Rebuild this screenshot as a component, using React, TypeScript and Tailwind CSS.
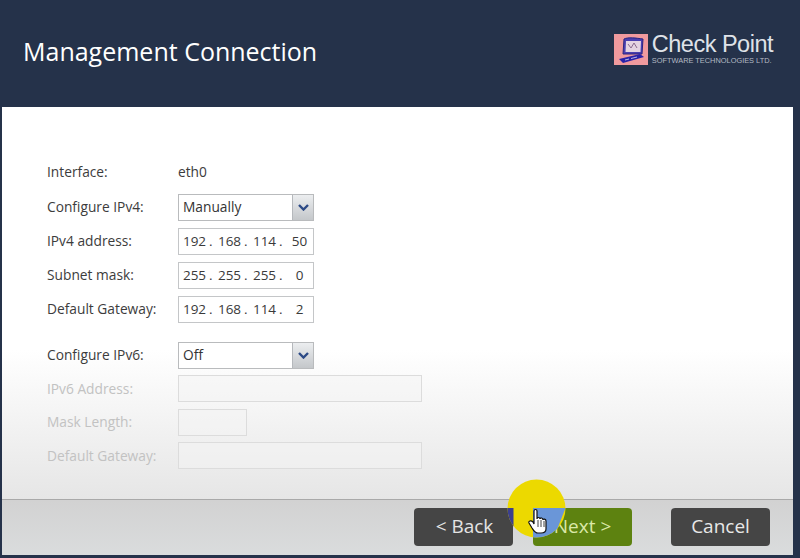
import React from "react";

const font = { fontFamily: '"Open Sans", sans-serif' };

function Arrow() {
  return (
    <div className="flex h-full w-[21px] items-center justify-center border-l border-[#b5b8bc] bg-gradient-to-b from-[#eceef0] to-[#c4c7ca]">
      <svg width="11" height="7" viewBox="0 0 11 7">
        <path d="M1 1 L5.5 5.5 L10 1" fill="none" stroke="#2c4a86" strokeWidth="2.4" />
      </svg>
    </div>
  );
}

function Select({ value }: { value: string }) {
  return (
    <div className="flex h-[27px] w-[136px] items-center justify-between border border-[#b9bbbd] bg-white">
      <span className="pl-[4px] text-[13.75px] text-[#333]">{value}</span>
      <Arrow />
    </div>
  );
}

function Ip({ a, b, c, d }: { a: string; b: string; c: string; d: string }) {
  return (
    <div className="flex h-[27px] w-[136px] items-center border border-[#c4c6c8] bg-white pl-[2px] text-[13.5px] text-[#3a3a3a]">
      <span className="w-[27px] text-center">{a}</span>
      <span className="w-[8px] pl-[1px] text-left">.</span>
      <span className="w-[27px] text-center">{b}</span>
      <span className="w-[8px] pl-[1px] text-left">.</span>
      <span className="w-[27px] text-center">{c}</span>
      <span className="w-[8px] pl-[1px] text-left">.</span>
      <span className="w-[27px] text-center">{d}</span>
    </div>
  );
}

function Row({ label, children, muted, mt, lcls = "" }: { label: string; children: React.ReactNode; muted?: boolean; mt: string; lcls?: string }) {
  return (
    <div className={`flex items-center ${mt}`}>
      <div className={`w-[131px] text-[13.75px] ${lcls} ${muted ? "text-[#c2c2c2]" : "text-[#3c3c3c]"}`}>{label}</div>
      {children}
    </div>
  );
}

function Disabled({ w }: { w: string }) {
  return <div className={`h-[27px] border border-[#dcdcdc] bg-[#f3f3f3]/50 ${w}`} />;
}

function Btn({ children, cls }: { children: React.ReactNode; cls: string }) {
  return (
    <div className={`flex h-[38px] w-[99px] items-center justify-center rounded-[4px] pb-[1px] text-[19px] ${cls}`}>
      {children}
    </div>
  );
}

function Logo() {
  return (
    <div className="flex items-start">
      <div className="flex h-[31px] w-[34px] items-center justify-center bg-[#f09a9e]">
        <svg width="30" height="28" viewBox="0 0 30 28">
          <path d="M8 3 C12 1 20 2 27 3 L26 18 L7 18 Z" fill="#4a3fb0" stroke="#2a2580" />
          <path d="M10 5 L25 5 L24.500 16 L9.500 16 Z" fill="#e4d4e2" />
          <path d="M12 8 L15 12 L18 7 L21 12" fill="none" stroke="#8a6a90" strokeWidth="1" />
          <path d="M3 23 L24 18 L28 21 L7 27 Z" fill="#2a22a8" />
          <path d="M9 24 L13 23 M15 22.500 L21 21" stroke="#c7c4ee" strokeWidth="0.9" />
        </svg>
      </div>
      <div className="ml-[4px] flex flex-col" style={{ fontFamily: '"Liberation Sans", sans-serif' }}>
        <span className="mt-[-2px] h-[25px] whitespace-nowrap text-[23.500px] leading-[25px] tracking-[-0.5px] text-[#dfe2e8]">
          Check Point
        </span>
        <span className="whitespace-nowrap text-[7.400px] leading-[8px] text-[#b4bac4]">
          SOFTWARE TECHNOLOGIES LTD.
        </span>
      </div>
    </div>
  );
}

export default function App() {
  return (
    <div className="relative flex h-[558px] w-[800px] flex-col overflow-hidden bg-[#25324a]" style={font}>
      <header className="flex h-[107px] items-start justify-between pl-[23px] pr-[27px]">
        <h1 className="mt-[34px] text-[25px] leading-[34px] text-white">Management Connection</h1>
        <div className="mt-[34px]">
          <Logo />
        </div>
      </header>

      <main className="ml-[2px] mr-[7px] flex h-[448px] flex-col bg-white">
        <div className="h-[392px] bg-gradient-to-b from-white from-[62%] to-[#e6e6e6] pl-[45px] pt-[55px]">
          <div className="flex h-[20px] items-center">
            <div className="w-[131px] text-[13.75px] text-[#3c3c3c]">Interface:</div>
            <span className="text-[13.75px] text-[#3c3c3c]">eth0</span>
          </div>
          <Row label="Configure IPv4:" mt="mt-[12px]">
            <Select value="Manually" />
          </Row>
          <Row label="IPv4 address:" mt="mt-[7px]">
            <Ip a="192" b="168" c="114" d="50" />
          </Row>
          <Row label="Subnet mask:" mt="mt-[7px]">
            <Ip a="255" b="255" c="255" d="0" />
          </Row>
          <Row label="Default Gateway:" mt="mt-[7px]">
            <Ip a="192" b="168" c="114" d="2" />
          </Row>
          <Row label="Configure IPv6:" mt="mt-[19px]">
            <Select value="Off" />
          </Row>
          <Row label="IPv6 Address:" muted mt="mt-[6px]" lcls="pt-[2px]">
            <Disabled w="w-[244px]" />
          </Row>
          <Row label="Mask Length:" muted mt="mt-[7px]">
            <Disabled w="w-[69px]" />
          </Row>
          <Row label="Default Gateway:" muted mt="mt-[6px]" lcls="pt-[2px]">
            <Disabled w="w-[244px]" />
          </Row>
        </div>
        <footer className="flex flex-1 items-start justify-end border-t border-[#a9a9a9] bg-gradient-to-b from-[#d2d2d2] to-[#dadcdd] pr-[23px] pt-[8px]">
          <Btn cls="bg-[#454545] pl-[2px] text-[#e4e4e4]">&lt; Back</Btn>
          <Btn cls="ml-[20px] bg-[#5d8210] text-[#dbe8a8]">Next &gt;</Btn>
          <Btn cls="ml-[39px] bg-[#454545] text-[#e8e8e8]">Cancel</Btn>
        </footer>
      </main>

      {/* Recording highlight and pointer over the button */}
      <svg className="absolute left-[500px] top-[475px]" width="72" height="72" viewBox="0 0 72 72">
        <defs>
          <clipPath id="btnclip">
            <path d="M33 33 H65.500 L53 65 H33 Z" />
          </clipPath>
          <clipPath id="backclip">
            <path d="M0 33 H13.500 V58 H0 Z" />
          </clipPath>
        </defs>
        <circle cx="36.500" cy="33.500" r="29" fill="#ecd900" />
        <circle cx="36.500" cy="33.500" r="29" fill="#6a96d8" clipPath="url(#btnclip)" />
        <circle cx="36.500" cy="33.500" r="29" fill="#3b3f8f" clipPath="url(#backclip)" />
        <path
          d="M34 36 C34 34 37 34 37 36 L37 44 C37 42 40 42 40 44 C40 42.500 43 42.500 43 45 C43 43.500 46 44 46 46 L46 54 C46 57 44 58 41 58 L38 58 C35 58 34 56 32 53 L29 48 C28 46 31 45 33 47 L34 49 Z"
          fill="#fff"
          stroke="#111"
          strokeWidth="1.200"
        />
        <path d="M38 45 V52 M41 45 V52 M44 46 V52" stroke="#111" strokeWidth="0.800" />
      </svg>
    </div>
  );
}
